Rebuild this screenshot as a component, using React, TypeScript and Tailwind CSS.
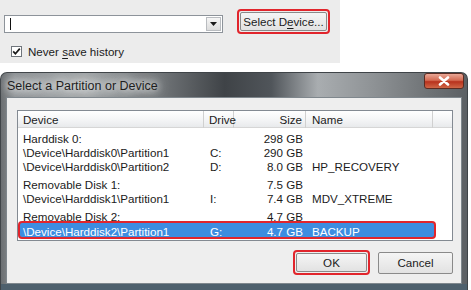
import React from "react";

const rows: { kind: "group" | "item"; device: string; drive?: string; size: string; name?: string; gap?: boolean }[] = [
  { kind: "group", device: "Harddisk 0:", size: "298 GB" },
  { kind: "item", device: "\\Device\\Harddisk0\\Partition1", drive: "C:", size: "290 GB" },
  { kind: "item", device: "\\Device\\Harddisk0\\Partition2", drive: "D:", size: "8.0 GB", name: "HP_RECOVERY" },
  { kind: "group", device: "Removable Disk 1:", size: "7.5 GB", gap: true },
  { kind: "item", device: "\\Device\\Harddisk1\\Partition1", drive: "I:", size: "7.4 GB", name: "MDV_XTREME" },
  { kind: "group", device: "Removable Disk 2:", size: "4.7 GB", gap: true },
];

const CloseGlyph = () => (
  <svg width="12" height="10" viewBox="0 0 12 10">
    <path d="M2 1.5 L10 8.5 M10 1.5 L2 8.5" stroke="#ffffff" strokeWidth="2.6" strokeLinecap="round" />
  </svg>
);

const CheckGlyph = () => (
  <svg width="9" height="9" viewBox="0 0 9 9">
    <path d="M1.2 4.4 L3.4 6.8 L7.8 1.6" fill="none" stroke="#1a1a1a" strokeWidth="1.7" />
  </svg>
);

export default function App() {
  return (
    <div className="w-[471px] h-[290px] overflow-hidden bg-white text-[11.6px] text-[#1b1b1b] font-['Tahoma','Liberation_Sans',sans-serif]">
      {/* Top panel: history combo + Select Device button */}
      <div className="w-[340px] h-[63px] bg-[#ececec] pt-[9px] pl-[4px]">
        <div className="flex items-center">
          <div className="w-[219px] h-[18px] mt-[4px] flex items-center bg-white border border-[#8d939a]">
            <div className="ml-[5px] w-px h-[12px] bg-[#111]" />
            <div className="ml-auto mr-[1px] w-[15px] h-[14px] flex items-center justify-center bg-[linear-gradient(180deg,#f6f6f6,#dcdcdc)] border border-[#b9bcc0]">
              <svg width="7" height="4" viewBox="0 0 7 4">
                <path d="M0 0 H7 L3.5 4 Z" fill="#1a1a1a" />
              </svg>
            </div>
          </div>
          <div className="ml-[14px] w-[93px] h-[25px] p-[1px] border-2 border-[#e1252c] rounded-[4px]">
            <button className="w-full h-full bg-[linear-gradient(180deg,#f5f5f5,#e2e2e2)] border border-[#8a8a8a] rounded-[2px] text-[11.6px] text-[#1b1b1b]">
              Select D<span className="underline underline-offset-2">e</span>vice...
            </button>
          </div>
        </div>
        <div className="flex items-center mt-[9px] ml-[7px]">
          <div className="w-[11px] h-[11px] bg-white border border-[#6f757c] flex items-center justify-center">
            <CheckGlyph />
          </div>
          <span className="ml-[6px]">
            Never <span className="underline underline-offset-2">s</span>ave history
          </span>
        </div>
      </div>

      {/* Dialog window */}
      <div className="mt-[9px] w-[468px] h-[225px] flex flex-col rounded-t-[7px] border border-[#3f4448] border-b-0 bg-[linear-gradient(90deg,#6b6f72_0%,#8f9396_3%,#a3a7a9_18%,#75797c_33%,#3f4347_48%,#50555a_58%,#a9adb0_68%,#8e9295_80%,#6e7275_92%,#5c6064_100%)]">
        <div className="h-[24px] flex items-start justify-between">
          <div className="pl-[6px] pt-[4px] text-[12.5px] text-[#1e1e1e] font-['Liberation_Sans',sans-serif] [text-shadow:0_0_6px_#e8e9ea,0_0_10px_#e8e9ea,0_0_14px_#e8e9ea]">
            Select a Partition or Device
          </div>
          <div className="mr-[3px] w-[40px] h-[16px] flex items-center justify-center rounded-[3px] border border-[#5b2b22] bg-[linear-gradient(180deg,#e9a796_0%,#d46a52_45%,#b8321d_55%,#cf6646_100%)]">
            <CloseGlyph />
          </div>
        </div>

        {/* Client area */}
        <div className="mx-[5px] h-[187px] bg-[#eeeeee] border border-[#7f878d] pt-[12px] pl-[10px]">
          <div className="w-[436px] h-[131px] bg-white border border-[#838a92]">
            {/* Header */}
            <div className="h-[17px] grid grid-cols-[186px_30px_72px_127px_19px] bg-[linear-gradient(180deg,#ffffff,#f4f5f6_55%,#e8eaec)] border-b border-[#d6d6d6]">
              <div className="pl-[5px] flex items-center border-r border-[#d0d0d0]">Device</div>
              <div className="pl-[5px] flex items-center border-r border-[#d0d0d0]">Drive</div>
              <div className="pr-[3px] flex items-center justify-end border-r border-[#d0d0d0]">Size</div>
              <div className="pl-[6px] flex items-center border-r border-[#d0d0d0]">Name</div>
              <div />
            </div>
            {/* Rows */}
            <div className="pt-[2px]">
              {rows.map((r, i) => (
                <div
                  key={i}
                  className={`h-[14px] grid grid-cols-[186px_30px_72px_127px] items-center ${r.gap ? "mt-[4px]" : ""}`}
                >
                  <div className="pl-[5px] whitespace-nowrap">{r.device}</div>
                  <div className="pl-[6px]">{r.drive}</div>
                  <div className="pr-[3px] text-right">{r.size}</div>
                  <div className="pl-[6px]">{r.name}</div>
                </div>
              ))}
              <div className="ml-[2px] mt-[1px] w-[414px] h-[14px] grid grid-cols-[184px_30px_72px_128px] items-center bg-[#3d8de0] text-white ring-2 ring-[#e1252c] rounded-[2px]">
                <div className="pl-[3px] whitespace-nowrap">\Device\Harddisk2\Partition1</div>
                <div className="pl-[6px]">G:</div>
                <div className="pr-[3px] text-right">4.7 GB</div>
                <div className="pl-[6px]">BACKUP</div>
              </div>
            </div>
          </div>

          {/* Buttons */}
          <div className="w-[436px] mt-[9px] flex justify-end items-center">
            <div className="w-[77px] h-[25px] p-[1px] border-2 border-[#e1252c] rounded-[4px]">
              <button className="w-full h-full bg-[linear-gradient(180deg,#f5f5f5,#e2e2e2)] border border-[#8a8a8a] rounded-[2px] text-[11.6px] text-[#1b1b1b]">
                OK
              </button>
            </div>
            <button className="ml-[8px] w-[75px] h-[22px] bg-[linear-gradient(180deg,#f5f5f5,#e2e2e2)] border border-[#8a8a8a] rounded-[2px] text-[11.6px] text-[#1b1b1b]">
              Cancel
            </button>
          </div>
        </div>
        <div className="flex-1 bg-[#4e606d]" />
      </div>
    </div>
  );
}
